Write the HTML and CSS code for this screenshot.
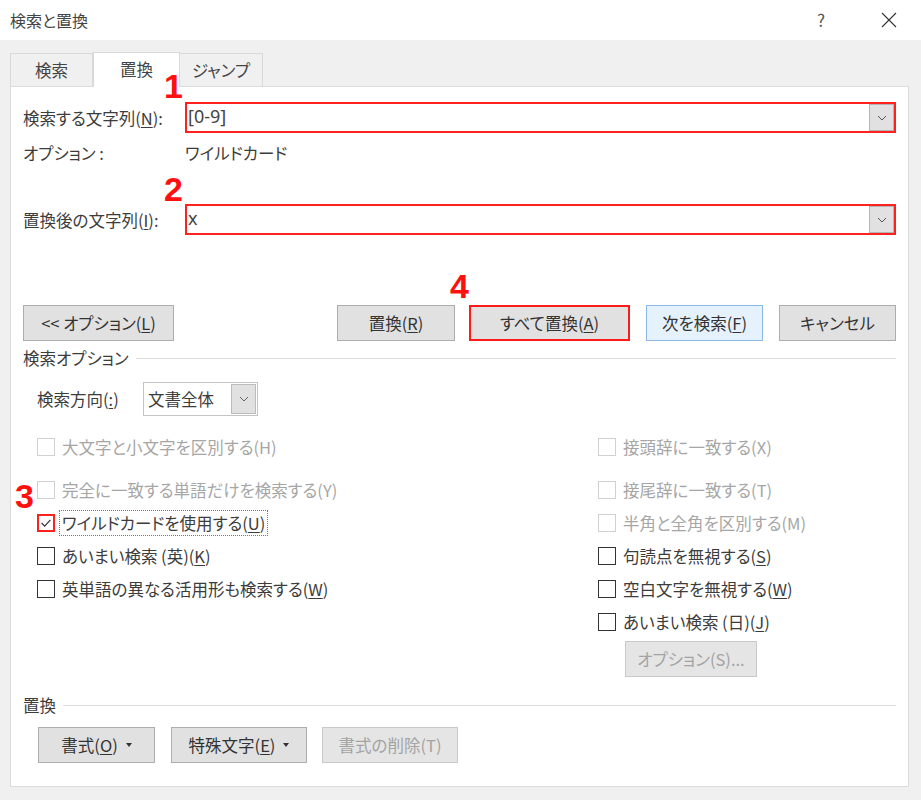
FILE: index.html
```html
<!DOCTYPE html>
<html lang="ja">
<head>
    <meta charset="UTF-8">
    <title>検索と置換</title>
    <link rel="stylesheet" href="styles.css">
</head>
<body>

<div class="titlebar">
    <span class="title">検索と置換</span>
    <span class="help">?</span>
    <svg class="close" width="16" height="16" viewBox="0 0 16 16">
        <path d="M1 1 L15 15 M15 1 L1 15" stroke="#333" stroke-width="1.1" fill="none"/>
    </svg>
</div>

<div class="dialog">
    <div class="tabs">
        <div class="tab">検索</div>
        <div class="tab active">置換</div>
        <div class="tab">ジャンプ</div>
    </div>

    <div class="panel">
        <!-- search / replace strings -->
        <div class="field-row">
            <span class="field-label">検索する文字列(<u>N</u>):</span>
            <div class="combo marked">
                <span class="combo-text">[0-9]</span>
                <span class="combo-btn">
                    <svg width="10" height="6" viewBox="0 0 10 6"><polyline points="1,1 5,5 9,1" fill="none" stroke="#555" stroke-width="1"/></svg>
                </span>
            </div>
        </div>
        <div class="option-row">
            <span class="field-label">オプション :</span>
            <span>ワイルドカード</span>
        </div>
        <div class="field-row second">
            <span class="field-label">置換後の文字列(<u>I</u>):</span>
            <div class="combo marked">
                <span class="combo-text">x</span>
                <span class="combo-btn">
                    <svg width="10" height="6" viewBox="0 0 10 6"><polyline points="1,1 5,5 9,1" fill="none" stroke="#555" stroke-width="1"/></svg>
                </span>
            </div>
        </div>

        <!-- main buttons -->
        <div class="button-row">
            <button class="btn w-options">&lt;&lt; オプション(<u>L</u>)</button>
            <div class="button-group">
                <button class="btn w-replace">置換(<u>R</u>)</button>
                <button class="btn w-all marked">すべて置換(<u>A</u>)</button>
                <button class="btn w-next focus">次を検索(<u>F</u>)</button>
                <button class="btn w-cancel">キャンセル</button>
            </div>
        </div>

        <div class="group-title">検索オプション</div>

        <div class="direction-row">
            <span class="direction-label">検索方向(<u>:</u>)</span>
            <div class="select">
                <span class="select-text">文書全体</span>
                <span class="select-btn">
                    <svg width="10" height="6" viewBox="0 0 10 6"><polyline points="1,1 5,5 9,1" fill="none" stroke="#666" stroke-width="1"/></svg>
                </span>
            </div>
        </div>

        <div class="check-grid">
            <div class="check-col">
                <div class="check disabled first"><span class="box"></span>大文字と小文字を区別する(H)</div>
                <div class="check disabled"><span class="box"></span>完全に一致する単語だけを検索する(Y)</div>
                <div class="check">
                    <span class="box checked">
                        <svg width="16" height="16" viewBox="0 0 16 16"><polyline points="3,8 6.5,11.5 13,4.5" fill="none" stroke="#333" stroke-width="1.4"/></svg>
                    </span>
                    <span class="focus-text">ワイルドカードを使用する(<u>U</u>)</span>
                </div>
                <div class="check"><span class="box"></span>あいまい検索 (英)(<u>K</u>)</div>
                <div class="check"><span class="box"></span>英単語の異なる活用形も検索する(<u>W</u>)</div>
            </div>
            <div class="check-col">
                <div class="check disabled first"><span class="box"></span>接頭辞に一致する(X)</div>
                <div class="check disabled"><span class="box"></span>接尾辞に一致する(T)</div>
                <div class="check disabled"><span class="box"></span>半角と全角を区別する(M)</div>
                <div class="check"><span class="box"></span>句読点を無視する(<u>S</u>)</div>
                <div class="check"><span class="box"></span>空白文字を無視する(<u>W</u>)</div>
                <div class="check"><span class="box"></span>あいまい検索 (日)(<u>J</u>)</div>
                <button class="btn disabled w-sub">オプション(S)...</button>
            </div>
        </div>

        <div class="group-title replace-title">置換</div>

        <div class="bottom-row">
            <button class="btn w-format">書式(<u>O</u>)<span class="caret"></span></button>
            <button class="btn w-special">特殊文字(<u>E</u>)<span class="caret"></span></button>
            <button class="btn disabled w-clear">書式の削除(T)</button>
        </div>
    </div>
</div>

<!-- step annotations -->
<span class="num n1">1</span>
<span class="num n2">2</span>
<span class="num n3">3</span>
<span class="num n4">4</span>

</body>
</html>
```

FILE: styles.css
```css
* {
    box-sizing: border-box;
}
body {
    margin: 0;
    height: 800px;
    overflow: hidden;
    position: relative;
    background: #f0f0f0;
    font-family: "Noto Sans CJK JP", "Noto Sans", sans-serif;
    font-feature-settings: "palt";
    font-size: 16.5px;
    line-height: 20px;
    color: #3c3c3c;
}
u {
    text-underline-offset: 2px;
}

/* title bar */
.titlebar {
    height: 40px;
    background: #fff;
    display: flex;
    align-items: center;
    padding-left: 10px;
}
.title {
    flex: 1;
    font-size: 16px;
    color: #444;
}
.help {
    width: 20px;
    text-align: center;
    margin-right: 50px;
    font-size: 17px;
    color: #555;
}
.close {
    margin-right: 24px;
}

/* tabs + panel */
.dialog {
    padding: 12px 0 0 10px;
}
.tabs {
    display: flex;
    align-items: flex-end;
    height: 34px;
}
.tab {
    height: 33px;
    width: 83px;
    border: 1px solid #d9d9d9;
    border-bottom: none;
    display: flex;
    align-items: center;
    justify-content: center;
    color: #444;
}
.tab + .tab {
    border-left: none;
}
.tab.active {
    width: 87px;
    height: 35px;
    margin-bottom: -1px;
    background: #fff;
    position: relative;
    z-index: 1;
    border-left: 1px solid #d9d9d9;
    padding-bottom: 2px;
}
.tab.active + .tab {
    border-left: none;
}
.panel {
    width: 899px;
    background: #fff;
    border: 1px solid #dcdcdc;
    padding: 15px 12px 23px 12px;
}

.field-row {
    display: flex;
    align-items: center;
    height: 31px;
}
.field-row.second {
    margin-top: 41px;
}
.field-label {
    width: 162px;
    flex-shrink: 0;
}
.combo {
    flex: 1;
    height: 31px;
    display: flex;
    background: #fff;
    border: 1px solid #7a7a7a;
}
.combo.marked {
    border: 2px solid #ff2020;
}
.combo-text {
    flex: 1;
    padding-left: 1px;
    font-family: "Noto Sans", sans-serif;
    font-size: 18px;
    line-height: 25px;
    color: #444;
}
.combo-btn {
    width: 25px;
    background: #e1e1e1;
    border: 1px solid #b4b4b4;
    display: flex;
    align-items: center;
    justify-content: center;
}
.option-row {
    display: flex;
    margin-top: 10px;
    height: 20px;
}

/* buttons */
.btn {
    height: 36px;
    font-family: inherit;
    font-feature-settings: "palt";
    font-size: 16.5px;
    color: #333;
    background: #e1e1e1;
    border: 1px solid #adadad;
    padding: 0;
    display: flex;
    align-items: center;
    justify-content: center;
}
.btn.marked {
    border: 2px solid #ff1a1a;
}
.btn.focus {
    background: #e5f1fb;
    border-color: #8cb8e8;
}
.btn.disabled {
    color: #a3a3a3;
    background: #e5e5e5;
    border-color: #c9c9c9;
}
.button-row {
    display: flex;
    margin-top: 70px;
}
.button-group {
    display: flex;
    margin-left: auto;
}
.w-options { width: 151px; }
.w-replace { width: 118px; }
.w-all { width: 161px; margin-left: 14px; }
.w-next { width: 117px; margin-left: 16px; }
.w-cancel { width: 117px; margin-left: 16px; }

.group-title {
    display: flex;
    align-items: center;
    height: 20px;
    margin-top: 7px;
}
.group-title::after {
    content: "";
    flex: 1;
    height: 1px;
    background: #dcdcdc;
    margin-left: 7px;
}
.replace-title {
    margin-top: 18px;
}

.direction-row {
    display: flex;
    align-items: center;
    margin-top: 14px;
    padding-left: 14px;
}
.direction-label {
    width: 106px;
}
.select {
    width: 115px;
    height: 34px;
    border: 1px solid #c4c4c4;
    display: flex;
    background: #fff;
}
.select-text {
    flex: 1;
    padding-left: 4px;
    line-height: 32px;
}
.select-btn {
    width: 25px;
    margin: 1px;
    background: #e1e1e1;
    border: 1px solid #bcbcbc;
    display: flex;
    align-items: center;
    justify-content: center;
}

/* checkboxes */
.check-grid {
    display: grid;
    grid-template-columns: 561px 1fr;
    margin-top: 14px;
    padding-left: 14px;
}
.check-col {
    display: flex;
    flex-direction: column;
}
.check {
    display: flex;
    align-items: center;
    height: 33px;
    white-space: nowrap;
}
.check.first {
    margin-bottom: 10px;
}
.box {
    width: 18px;
    height: 18px;
    border: 1px solid #333;
    margin-right: 7px;
    flex-shrink: 0;
    display: flex;
    align-items: center;
    justify-content: center;
}
.box.checked {
    border: 2px solid #ff2020;
}
.check.disabled {
    color: #a6a6a6;
}
.check.disabled .box {
    border-color: #d0d0d0;
}
.focus-text {
    outline: 1px dotted #777;
    outline-offset: 0;
    padding: 2px 2px;
    margin-left: -2px;
}
.w-sub {
    width: 132px;
    margin-top: 3px;
    margin-left: 27px;
}

.bottom-row {
    display: flex;
    margin-top: 12px;
    padding-left: 15px;
}
.w-format { width: 117px; }
.w-special { width: 136px; margin-left: 16px; }
.w-clear { width: 136px; margin-left: 15px; }
.caret {
    width: 0;
    height: 0;
    border-left: 3px solid transparent;
    border-right: 3px solid transparent;
    border-top: 4px solid #333;
    margin-left: 8px;
}

/* red step numbers */
.num {
    position: absolute;
    z-index: 2;
    font-family: "Liberation Sans", Arial, sans-serif;
    font-weight: bold;
    font-size: 34px;
    line-height: 34px;
    color: #ff1010;
}
.n1 { left: 164px; top: 69px; }
.n2 { left: 164px; top: 172px; }
.n3 { left: 15px; top: 479px; }
.n4 { left: 450px; top: 269px; }
```
